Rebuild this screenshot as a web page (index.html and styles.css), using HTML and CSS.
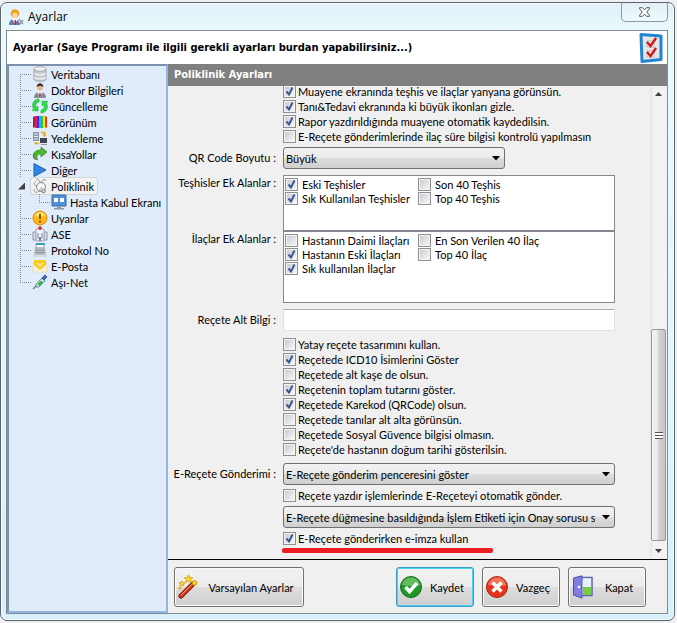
FILE: index.html
```html
<!DOCTYPE html>
<html lang="tr">
<head>
    <meta charset="UTF-8">
    <meta name="viewport" content="width=device-width, initial-scale=1.0">
    <title>Ayarlar</title>
    <link rel="stylesheet" href="styles.css">
</head>
<body>
    <div class="window">
        <div class="titlebar">
            <svg class="icon" viewBox="0 0 16 16">
                <path d="M1 16c0-4 2-6 5-6s6 2 6 6z" fill="#5b7fb8"/>
                <path d="M4 10l3 5 3-5z" fill="#fff"/>
                <circle cx="7" cy="4.500" r="4.300" fill="#f0a020"/>
                <circle cx="7" cy="6" r="2.600" fill="#fbd9a8"/>
                <path d="M6.500 11h1.500l.5 4-1 1-1-1z" fill="#c22"/>
                <path d="M11 10l4 5M15 11l-3 4" stroke="#99a" stroke-width="1.500"/>
            </svg>
            <span class="caption">Ayarlar</span>
            <button type="button" class="close" aria-label="Kapat">
                <svg width="13" height="10" viewBox="0 0 13 10">
                    <path d="M1.500.7h3l2 2.200 2-2.200h3v1L8.700 5l2.800 3.300v1h-3l-2-2.200-2 2.200h-3v-1L4.300 5 1.500 1.700z" fill="#fff" stroke="#51565c"/>
                </svg>
            </button>
        </div>
        <div class="client">
            <div class="header">
                <h1>Ayarlar (Saye Programı ile ilgili gerekli ayarları burdan yapabilirsiniz...)</h1>
                <svg width="24" height="30" viewBox="0 0 24 30">
                    <path d="M2 1.500L22 3v23.500L3 28.500z" fill="#e4e6ea" stroke="#2284cf" stroke-width="3" stroke-linejoin="round"/>
                    <path d="M8 8h7v6H8zM8 18h7v6H8z" fill="#f8f8f8" stroke="#b8b8bc"/>
                    <path d="M8 9l3.500 4L17 5M8 19l3.500 4L17 15" fill="none" stroke="#d01818" stroke-width="2.400"/>
                </svg>
            </div>
            <div class="main">
                <nav class="sidebar">
                    <ul class="tree">
                        <li><a href="#"><svg class="icon" viewBox="0 0 16 16"><path d="M2 3v10c0 3 12 3 12 0V3z" fill="#c9cdd1" stroke="#9ea4aa"/><ellipse cx="8" cy="3" rx="6" ry="2.200" fill="#f2f3f4" stroke="#a8adb2"/><path d="M2 7c1 2.500 11 2.500 12 0M2 11c1 2.500 11 2.500 12 0" fill="none" stroke="#fff"/></svg><span>Veritabanı</span></a></li>
                        <li><a href="#"><svg class="icon" viewBox="0 0 16 16"><path d="M2 16c0-4 2-6 6-6s6 2 6 6z" fill="#8a9099"/><path d="M5.500 10L8 15l2.500-5z" fill="#fff"/><path d="M7.500 10.500h1L9 14l-1 1-1-1z" fill="#b33"/><circle cx="8" cy="5.500" r="3" fill="#e5b692"/><path d="M4.700 5C4.500 0 11.500 0 11.300 5 10 3.500 6 3.500 4.700 5z" fill="#4a3028"/></svg><span>Doktor Bilgileri</span></a></li>
                        <li><a href="#"><svg class="icon" viewBox="0 0 16 16"><path d="M7 1C2 1-1 6 1.500 11l-1.500 1.500 6 .5V8L4.200 9.500C3 6 5 4 7 4zM9 15c5 0 8-5 5.500-10L16 3.500 10 3v5l1.800-1.500C13 10 11 12 9 12z" fill="#2fd84c" stroke="#18b236" stroke-width=".6"/></svg><span>Güncelleme</span></a></li>
                        <li><a href="#"><svg class="icon" viewBox="0 0 16 16"><path d="M1 3l2-1v11l-2 1z" fill="#b21a3a"/><path d="M3 2h2v12H3z" fill="#e01890"/><path d="M5 2h2v12H5z" fill="#3830d8"/><path d="M7 2h2v12H7z" fill="#18b8e8"/><path d="M9 2h2v12H9z" fill="#28c830"/><path d="M11 2h2v12h-2z" fill="#f4e020"/><path d="M13 2l2 1v11l-2-1z" fill="#f03818"/></svg><span>Görünüm</span></a></li>
                        <li><a href="#"><svg class="icon" viewBox="0 0 16 16"><path d="M1 2h6v9H1z" fill="#8b98a4"/><path d="M2 4h4M2 6.500h4M2 9h4" stroke="#e8eef4"/><path d="M8 8h7v5H8z" fill="#3c444e"/><path d="M9 14h6v1H9z" fill="#8b98a4"/><path d="M9 2.500h3.500V5" fill="none" stroke="#f4a31c" stroke-width="1.600"/><path d="M10.300 4.500h4.400L12.500 7z" fill="#f4a31c"/><path d="M7 13.500H3.500V12" fill="none" stroke="#f4a31c" stroke-width="1.600"/></svg><span>Yedekleme</span></a></li>
                        <li><a href="#"><svg class="icon" viewBox="0 0 16 16"><path d="M9 1l6 5-6 5V8C5 8 4 10 5.500 14 0 11 0 4 9 4z" fill="#4cb82e" stroke="#25801a" stroke-width=".7"/><path d="M4 14c-4-1-4-6-2-7 0 4 1 5 4 7z" fill="#777d77"/></svg><span>KısaYollar</span></a></li>
                        <li><a href="#"><svg class="icon" viewBox="0 0 16 16"><path d="M2 1.500L14 8 2 14.500z" fill="#2e86e0" stroke="#1660b8"/></svg><span>Diğer</span></a></li>
                        <li class="open"><a href="#" class="selected"><svg class="icon" viewBox="0 0 16 16"><path d="M4 2c2-1.500 3 0 4 2M14 2c-3-1-4 1-5 3" fill="none" stroke="#888"/><circle cx="9" cy="9" r="4.500" fill="#f7f7f7" stroke="#858585"/><path d="M4 3C1 5 2 8 5 8M2 11c0 4 3 4 5 2l3-4" fill="none" stroke="#999"/><circle cx="11.500" cy="13" r="1.800" fill="#ddd" stroke="#777"/></svg><span>Poliklinik</span></a></li>
                        <li class="child"><a href="#"><svg class="icon" viewBox="0 0 16 16"><path d="M1 1h14v11H1z" fill="#4b94dc" stroke="#3b6ea8"/><path d="M3 4h4v4H3zM9 4h4v4H9z" fill="#fff"/><path d="M6 12h4v2h3v1.500H3V14h3z" fill="#8d99a6"/></svg><span>Hasta Kabul Ekranı</span></a></li>
                        <li><a href="#"><svg class="icon" viewBox="0 0 16 16"><circle cx="8" cy="8" r="7" fill="#ffb818" stroke="#e08a08"/><path d="M3 6c1-5 9-5 10 0-3 1-7 1-10 0z" fill="#ffe070"/><path d="M8 4v5M8 10.500v2" stroke="#8a4a00" stroke-width="1.800"/></svg><span>Uyarılar</span></a></li>
                        <li><a href="#"><svg class="icon" viewBox="0 0 16 16"><path d="M1 6h3v8H1zM12 6h3v8h-3z" fill="#d6dae6" stroke="#8e94aa"/><path d="M4 3h8v12H4z" fill="#f0f1f6" stroke="#a4a9bc"/><path d="M8 0v4M6 2h4" stroke="#e02828" stroke-width="1.500"/><path d="M6 7v6M10 7v6" stroke="#a0a8c4" stroke-width="1.500"/><path d="M7 11h2v4H7z" fill="#7a82a0"/></svg><span>ASE</span></a></li>
                        <li><a href="#"><svg class="icon" viewBox="0 0 16 16"><path d="M4 2h8v7H4z" fill="#fff" stroke="#9aa6b0"/><path d="M4 1h9v2H4z" fill="#3c9cb4"/><path d="M3 5h10l1 9H2z" fill="#b4bcc2"/><path d="M4 8h8M4 10.500h8" stroke="#7a868e" stroke-dasharray="2 1"/><path d="M1 13h14v2H1z" fill="#d7dce0"/></svg><span>Protokol No</span></a></li>
                        <li><a href="#"><svg class="icon" viewBox="0 0 16 16"><path d="M1 5h14v9H1z" fill="#f6efd2" stroke="#e0d6a8" stroke-width=".6"/><path d="M2 2h12v5l-6 5-6-5z" fill="#f8ca20"/><path d="M5 5l3 3 3-3" fill="none" stroke="#fff0a0" stroke-width="1.300"/></svg><span>E-Posta</span></a></li>
                        <li><a href="#"><svg class="icon" viewBox="0 0 16 16"><path d="M1 15l4-4" stroke="#777" stroke-width="1.200"/><path d="M4 10l6-6 3 3-6 6-3 0z" fill="#c8e4f0" stroke="#55788c" stroke-width=".8"/><path d="M5.500 10L9 6.500l2 2L7.500 12z" fill="#30b830"/><path d="M10 4l3-3 2 2-3 3z" fill="#3c78d8" stroke="#2850a0"/></svg><span>Aşı-Net</span></a></li>
                    </ul>
                </nav>
                <form class="content" action="#" method="post">
                    <h2>Poliklinik Ayarları</h2>
                    <div class="viewport">
                        <div class="fields">
                            <div class="row first">
                                <div class="checks">
                                    <label><input type="checkbox" checked>Muayene ekranında teşhis ve ilaçlar yanyana görünsün.</label>
                                    <label><input type="checkbox" checked>Tanı&amp;Tedavi ekranında ki büyük ikonları gizle.</label>
                                    <label><input type="checkbox" checked>Rapor yazdırıldığında muayene otomatik kaydedilsin.</label>
                                    <label><input type="checkbox">E-Reçete gönderimlerinde ilaç süre bilgisi kontrolü yapılmasın</label>
                                </div>
                            </div>
                            <div class="row near">
                                <label class="name" for="qr">QR Code Boyutu :</label>
                                <select id="qr" class="short"><option>Büyük</option></select>
                            </div>
                            <div class="row">
                                <span class="name" id="teshis">Teşhisler Ek Alanlar :</span>
                                <div class="listbox" role="group" aria-labelledby="teshis">
                                    <label><input type="checkbox" checked>Eski Teşhisler</label>
                                    <label><input type="checkbox">Son 40 Teşhis</label>
                                    <label><input type="checkbox" checked>Sık Kullanılan Teşhisler</label>
                                    <label><input type="checkbox">Top 40 Teşhis</label>
                                </div>
                            </div>
                            <div class="row joined">
                                <span class="name" id="ilac">İlaçlar Ek Alanlar :</span>
                                <div class="listbox tall" role="group" aria-labelledby="ilac">
                                    <label><input type="checkbox">Hastanın Daimi İlaçları</label>
                                    <label><input type="checkbox">En Son Verilen 40 İlaç</label>
                                    <label><input type="checkbox" checked>Hastanın Eski İlaçları</label>
                                    <label><input type="checkbox">Top 40 İlaç</label>
                                    <label><input type="checkbox" checked>Sık kullanılan İlaçlar</label>
                                </div>
                            </div>
                            <div class="row">
                                <label class="name" for="alt-bilgi">Reçete Alt Bilgi :</label>
                                <input type="text" id="alt-bilgi">
                            </div>
                            <div class="row">
                                <div class="checks">
                                    <label><input type="checkbox">Yatay reçete tasarımını kullan.</label>
                                    <label><input type="checkbox" checked>Reçetede ICD10 İsimlerini Göster</label>
                                    <label><input type="checkbox">Reçetede alt kaşe de olsun.</label>
                                    <label><input type="checkbox" checked>Reçetenin toplam tutarını göster.</label>
                                    <label><input type="checkbox" checked>Reçetede Karekod (QRCode) olsun.</label>
                                    <label><input type="checkbox">Reçetede tanılar alt alta görünsün.</label>
                                    <label><input type="checkbox">Reçetede Sosyal Güvence bilgisi olmasın.</label>
                                    <label><input type="checkbox">Reçete'de hastanın doğum tarihi gösterilsin.</label>
                                </div>
                            </div>
                            <div class="row">
                                <label class="name" for="gonderim">E-Reçete Gönderimi :</label>
                                <select id="gonderim"><option>E-Reçete gönderim penceresini göster</option></select>
                            </div>
                            <div class="row near">
                                <div class="checks">
                                    <label><input type="checkbox">Reçete yazdır işlemlerinde E-Reçeteyi otomatik gönder.</label>
                                </div>
                            </div>
                            <div class="row near">
                                <select class="alone" aria-label="İşlem Etiketi"><option>E-Reçete düğmesine basıldığında İşlem Etiketi için Onay sorusu sorulsun</option></select>
                            </div>
                            <div class="row near">
                                <div class="checks marked">
                                    <label><input type="checkbox" checked>E-Reçete gönderirken e-imza kullan</label>
                                </div>
                            </div>
                        </div>
                        <div class="scrollbar">
                            <span class="arrow up"></span>
                            <span class="thumb"></span>
                            <span class="arrow down"></span>
                        </div>
                    </div>
                    <div class="footer">
                        <button type="reset" class="button wide">
                            <svg width="24" height="24" viewBox="0 0 24 24"><path d="M4 21L16 9" stroke="#7c1608" stroke-width="5" stroke-linecap="round"/><path d="M4 21L16 9" stroke="#e04020" stroke-width="3" stroke-linecap="round"/><path d="M4 20L15 9" stroke="#f59a78"/><circle cx="17.500" cy="8" r="2.300" fill="#ffd628" stroke="#c89008"/><path d="M11.500 0l1.300 2.500 3 .3-2.200 2 .7 2.700-2.800-1.300L8.700 7.500l.7-2.700-2.200-2 3-.3zM5 6l1 1.700 2 .2-1.500 1.300.4 1.800L5 10l-1.900 1 .4-1.800L2 7.900l2-.2z" fill="#ffd628" stroke="#c89008" stroke-width=".7"/><path d="M3 11l2 2-2 2-2-2z" fill="#e8b010"/></svg>
                            <span>Varsayılan Ayarlar</span>
                        </button>
                        <button type="submit" class="button default">
                            <svg width="24" height="24" viewBox="0 0 24 24"><circle cx="12" cy="12" r="10.500" fill="#1f9828" stroke="#146c1c"/><path d="M3 10C5 0 19 0 21 10c-5 3-12 0-18 0z" fill="#62bd5c"/><path d="M6.500 12l4 4.500L18 8" fill="none" stroke="#fff" stroke-width="3.500"/></svg>
                            <span>Kaydet</span>
                        </button>
                        <button type="button" class="button">
                            <svg width="24" height="24" viewBox="0 0 24 24"><circle cx="12" cy="12" r="10.500" fill="#e83418" stroke="#b02410"/><path d="M3 10C5 0 19 0 21 10c-5 3-12 0-18 0z" fill="#f4745a"/><path d="M7.500 7.500l9 9M16.500 7.500l-9 9" stroke="#fff" stroke-width="3.500"/></svg>
                            <span>Vazgeç</span>
                        </button>
                        <button type="button" class="button">
                            <svg width="24" height="24" viewBox="0 0 24 24"><path d="M8 2.500h13v18H8z" fill="#fff" stroke="#6060b8" stroke-width="1.500"/><path d="M12 12h8v8h-8z" fill="#74cc40"/><path d="M12 4h8v8h-8z" fill="#e4f2fc"/><path d="M2.500 3L11 .8v22.400L2.500 20z" fill="#8080e0" stroke="#5050a8"/><circle cx="8" cy="12" r="1.300" fill="#fff"/></svg>
                            <span>Kapat</span>
                        </button>
                    </div>
                </form>
            </div>
        </div>
    </div>
</body>
</html>
```
FILE: styles.css
```css
* {
    box-sizing: border-box;
}
body {
    margin: 0;
    padding: 2px 2px 2px 0;
    min-height: 100vh;
    display: flex;
    background-color: #eef0f4;
    font-family: Lato, Tahoma, sans-serif;
    font-size: 11px;
    color: #000;
}
.window {
    flex: 1;
    min-width: 0;
    display: flex;
    flex-direction: column;
    padding: 0 6px 6px 5px;
    border: 1px solid #5d666c;
    border-radius: 7px;
    box-shadow: inset 0 0 0 1px #f6ffff;
    background: linear-gradient(180deg, #e2f0f8 0, #e8f9fc 28px, #e2f8fb 50%, #d8effc 100%);
}
.titlebar {
    display: flex;
    align-items: center;
    height: 27px;
    padding-left: 2px;
}
.icon {
    width: 16px;
    height: 16px;
    flex: none;
}
.caption {
    flex: 1;
    margin-left: 4px;
    font-family: "Open Sans", "Segoe UI", sans-serif;
    font-size: 12px;
}
.close {
    align-self: flex-start;
    width: 47px;
    height: 19px;
    padding: 0;
    border: 1px solid #8c9aa3;
    border-top: none;
    border-radius: 0 0 5px 5px;
    background: linear-gradient(#e3eef5, #eefafc);
}
.close svg {
    display: block;
    margin: auto;
}
.client {
    flex: 1;
    display: flex;
    flex-direction: column;
    border: 1px solid #7f8c92;
    background-color: #f0f0f0;
}
.header {
    display: flex;
    align-items: center;
    justify-content: space-between;
    height: 33px;
    padding: 0 4px 0 6px;
    background-color: #fff;
}
h1, h2 {
    margin: 0;
    font-family: "DejaVu Sans Condensed", "DejaVu Sans", Tahoma, sans-serif;
    font-stretch: condensed;
    font-size: 11px;
    font-weight: bold;
}
.main {
    flex: 1;
    display: flex;
}
.sidebar {
    flex: none;
    width: 161px;
    border: 2px solid #93b5e4;
    border-left-color: #7d90ad;
    border-top-color: #7d90ad;
    background-color: #e0ecf9;
}
.tree {
    list-style: none;
    margin: 0;
    padding: 0 0 0 11px;
}
.tree li {
    display: flex;
    align-items: center;
    height: 16px;
}
.tree li::before {
    content: "";
    flex: none;
    width: 11px;
    height: 16px;
    background:
        repeating-linear-gradient(180deg, #808890 0 1px, transparent 1px 2px) 0 0 / 1px 100% no-repeat,
        repeating-linear-gradient(90deg, #808890 0 1px, transparent 1px 2px) 0 8px / 100% 1px no-repeat;
}
.tree li:first-child::before {
    background-position: 0 8px, 0 8px;
}
.tree li:last-child::before {
    background-size: 1px 8px, 100% 1px;
}
.tree .open::before {
    width: 7px;
    height: 7px;
    margin: 0 6px 0 -2px;
    background: #404040;
    clip-path: polygon(100% 0, 100% 100%, 0 100%);
}
.tree .child::before {
    width: 30px;
    background:
        repeating-linear-gradient(180deg, #808890 0 1px, transparent 1px 2px) 0 0 / 1px 100% no-repeat,
        repeating-linear-gradient(180deg, #808890 0 1px, transparent 1px 2px) 19px 0 / 1px 8px no-repeat,
        repeating-linear-gradient(90deg, #808890 0 1px, transparent 1px 2px) 19px 8px / 11px 1px no-repeat;
}
.tree a {
    display: flex;
    align-items: center;
    gap: 3px;
    height: 16px;
    padding: 0 1px;
    border-radius: 3px;
    color: #000;
    text-decoration: none;
    white-space: nowrap;
}
.tree .selected {
    padding-right: 3px;
    background-color: #f2f2f2;
    box-shadow: 0 0 0 1px #d2d4d6;
}
.content {
    flex: 1;
    min-width: 0;
    display: flex;
    flex-direction: column;
}
h2 {
    height: 22px;
    padding-left: 6px;
    line-height: 22px;
    background-color: #808080;
    color: #fff;
}
.viewport {
    flex: 1;
    display: flex;
    overflow: hidden;
    border-bottom: 1px solid #000;
}
.fields {
    flex: 1;
    min-width: 0;
    padding-right: 35px;
}
.row {
    display: grid;
    grid-template-columns: 108px minmax(0, 1fr);
    column-gap: 7px;
    margin-top: 6px;
}
.row.near {
    margin-top: 3px;
}
.row.joined {
    margin-top: 0;
}
/* the panel is scrolled down, so the first row is partly hidden */
.row.first {
    margin-top: -2px;
}
.name {
    padding-top: 1px;
    text-align: right;
    line-height: 14px;
    white-space: nowrap;
}
label.name {
    padding-top: 4px;
}
.checks, .alone {
    grid-column: 2;
}
.checks label, .listbox label {
    display: flex;
    align-items: center;
    gap: 2px;
    height: 15px;
    white-space: nowrap;
}
.marked::after {
    content: "";
    display: block;
    width: 211px;
    height: 5px;
    margin: 2px 0 0 -1px;
    border-radius: 2px;
    background-color: #ed1c24;
}
input[type="checkbox"] {
    appearance: none;
    flex: none;
    width: 13px;
    height: 13px;
    margin: 0;
    border: 1px solid #8e8f8f;
    background: linear-gradient(135deg, #c8ccd2, #f6f6f6) center / 9px 9px no-repeat #f4f4f4;
}
input[type="checkbox"]:checked {
    background:
        url("data:image/svg+xml,%3Csvg xmlns='http://www.w3.org/2000/svg' width='11' height='11'%3E%3Cpath d='M2.500 5.500l2.500 3 3.500-7' fill='none' stroke='%233c5796' stroke-width='2'/%3E%3C/svg%3E") center no-repeat,
        linear-gradient(135deg, #c8ccd2, #f6f6f6) center / 9px 9px no-repeat #f4f4f4;
}
.listbox {
    display: grid;
    grid-template-columns: 133px 1fr;
    align-content: start;
    height: 56px;
    padding: 1px;
    border: 1px solid #828790;
    background-color: #fff;
}
.listbox.tall {
    height: 72px;
}
.listbox label {
    height: 14px;
    gap: 4px;
}
select {
    appearance: none;
    width: 100%;
    height: 22px;
    margin: 0;
    padding: 0 19px 0 2px;
    border: 1px solid #707070;
    border-radius: 3px;
    font: inherit;
    color: #000;
    background:
        url("data:image/svg+xml,%3Csvg xmlns='http://www.w3.org/2000/svg' width='8' height='5'%3E%3Cpath d='M0 0h8L4 4.500z'/%3E%3C/svg%3E") right 4px center no-repeat,
        linear-gradient(#f2f2f2 0, #ebebeb 50%, #dddddd 50%, #cfcfcf 100%);
}
.short {
    width: 222px;
}
input[type="text"] {
    width: 100%;
    height: 22px;
    padding: 0 3px;
    border: 1px solid #e2e3ea;
    border-top-color: #abadb3;
    font: inherit;
}
.scrollbar {
    flex: none;
    display: flex;
    flex-direction: column;
    align-items: center;
    width: 17px;
    padding: 6px 1px;
    background: linear-gradient(90deg, #e6e6e6, #f2f2f2 4px);
}
.arrow {
    width: 7px;
    height: 4px;
    background-color: #404040;
    clip-path: polygon(50% 0, 100% 100%, 0 100%);
}
.arrow.down {
    margin-top: 8px;
    clip-path: polygon(0 0, 100% 0, 50% 100%);
}
.thumb {
    width: 15px;
    height: 212px;
    margin-top: auto;
    border: 1px solid #979797;
    border-radius: 2px;
    background:
        repeating-linear-gradient(#555 0 1px, #fff 1px 3px) center / 8px 7px no-repeat,
        linear-gradient(90deg, #f4f4f4 0, #e8e8e8 50%, #d4d4d4 50%, #c4c4c4 100%);
}
.footer {
    display: flex;
    gap: 8px;
    padding: 7px 21px 6px 6px;
}
.button {
    display: flex;
    align-items: center;
    width: 78px;
    height: 40px;
    padding: 0 2px;
    border: 1px solid #707070;
    border-radius: 3px;
    box-shadow: inset 0 0 0 1px #fafafa;
    background: linear-gradient(#f2f2f2 0, #ebebeb 50%, #dddddd 50%, #cfcfcf 100%);
    font: inherit;
    color: #000;
    white-space: nowrap;
}
.button span {
    flex: 1;
    text-align: center;
}
.button.wide {
    width: 130px;
    margin-right: auto;
}
.button.default {
    border-color: #3c9cc8;
    box-shadow: inset 0 0 0 1px #48d0f8;
}
```
